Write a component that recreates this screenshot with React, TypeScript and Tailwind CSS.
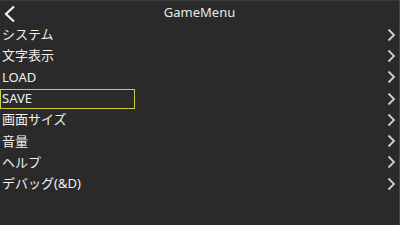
import React from 'react';

const items = ['システム', '文字表示', 'LOAD', 'SAVE', '画面サイズ', '音量', 'ヘルプ', 'デバッグ(&D)'];

const Chevron = () => (
    <svg width="10" height="14" viewBox="0 0 10 14" className="shrink-0">
        <path d="M2.5 1.5 L8 7 L2.5 12.5" fill="none" stroke="#d0d0d0" strokeWidth="1.8" />
    </svg>
);

export default function App() {
    return (
        <div
            className="w-[400px] h-[225px] bg-[#2a2a2a] text-[#f0f0f0] overflow-hidden border-r border-[#4a4a4a] border-t border-t-[#3a3a3a]"
            style={{ fontFamily: '"Noto Sans", "Noto Sans CJK JP", sans-serif' }}
        >
            <div className="relative h-[23px] flex items-center justify-center">
                <svg width="14" height="18" viewBox="0 0 14 18" className="absolute left-[3px] top-[4px]">
                    <path d="M11 1.5 L3 9 L11 16.5" fill="none" stroke="#f2f2f2" strokeWidth="2.2" />
                </svg>
                <span className="text-[13px] leading-none text-[#e8e8e8]">GameMenu</span>
            </div>
            <ul>
                {items.map(label => (
                    <li key={label} className="h-[21.3px] flex items-center justify-between pr-[3px]">
                        {label === 'SAVE' ? (
                            <span className="w-[135px] h-[20px] flex items-center pl-[1px] border-[1.5px] border-[#cfcf3a] text-[13px] leading-none">
                                {label}
                            </span>
                        ) : (
                            <span className="pl-[2px] text-[13px] leading-none">{label}</span>
                        )}
                        <Chevron />
                    </li>
                ))}
            </ul>
        </div>
    );
}
